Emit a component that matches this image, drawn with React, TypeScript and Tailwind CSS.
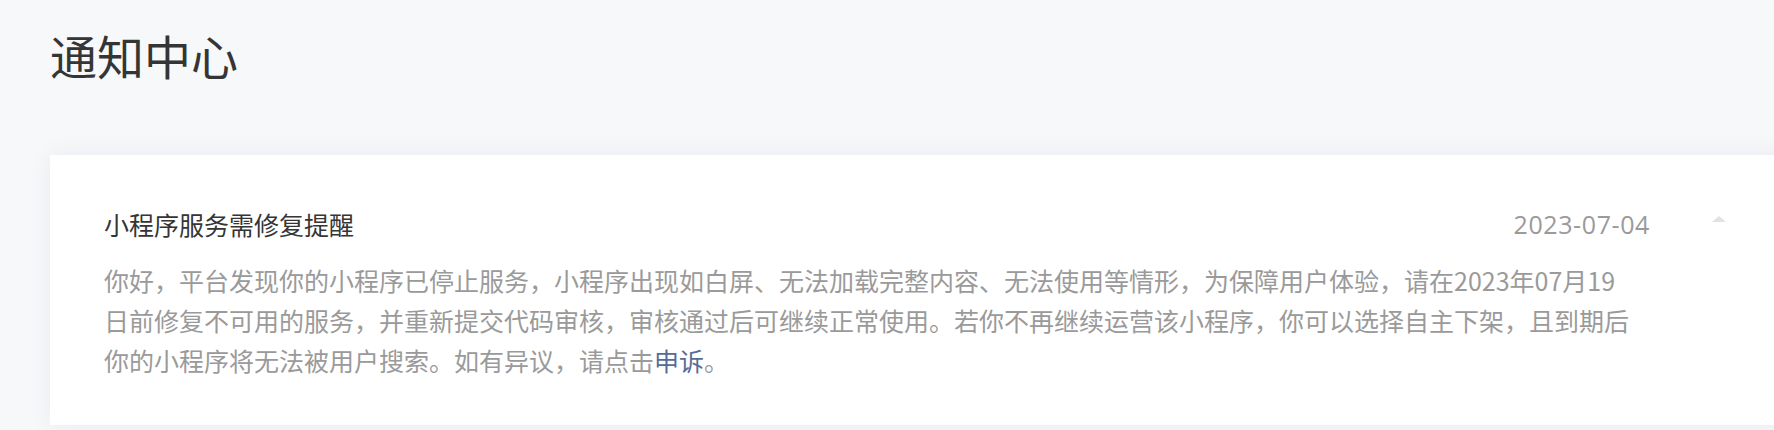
const notice = {
  title: "小程序服务需修复提醒",
  date: "2023-07-04",
  lines: [
    "你好，平台发现你的小程序已停止服务，小程序出现如白屏、无法加载完整内容、无法使用等情形，为保障用户体验，请在2023年07月19",
    "日前修复不可用的服务，并重新提交代码审核，审核通过后可继续正常使用。若你不再继续运营该小程序，你可以选择自主下架，且到期后",
    "你的小程序将无法被用户搜索。如有异议，请点击",
  ],
}

function NoticeCard() {
  return (
    <div className="flex bg-white pl-[54px] pt-[51px] pb-[45px] shadow-[0_0_24px_rgba(30,40,60,0.06)]">
      <div className="w-[1546px] shrink-0">
        <div className="flex items-center h-[36px]">
          <h3 className="flex-1 text-[25px] leading-[36px] font-normal text-[#353535]">{notice.title}</h3>
          <span className="font-['Open_Sans'] text-[25px] leading-[36px] tracking-[0.6px] text-[#9a9a9a]">
            {notice.date}
          </span>
        </div>
        <p className="mt-[18px] text-[25px] leading-[40px] text-[#9a9a9a]">
          {notice.lines[0]}
          <br />
          {notice.lines[1]}
          <br />
          {notice.lines[2]}
          <a className="text-[#576b95]">申诉</a>。
        </p>
      </div>
      <div className="ml-[62px] pt-[10px] shrink-0">
        <div className="w-0 h-0 border-x-[7px] border-x-transparent border-b-[6px] border-b-[#e1e2e8]" />
      </div>
    </div>
  )
}

export default function App() {
  return (
    <div
      className="h-[430px] w-full overflow-hidden bg-[#f7f8fa] pl-[50px] pt-[31px]"
      style={{ fontFamily: '"Noto Sans CJK SC", "Noto Sans", sans-serif' }}
    >
      <h1 className="text-[47px] leading-[47px] font-normal text-[#353535]">通知中心</h1>
      <div className="mt-[77px] w-[1800px]">
        <NoticeCard />
      </div>
    </div>
  )
}
